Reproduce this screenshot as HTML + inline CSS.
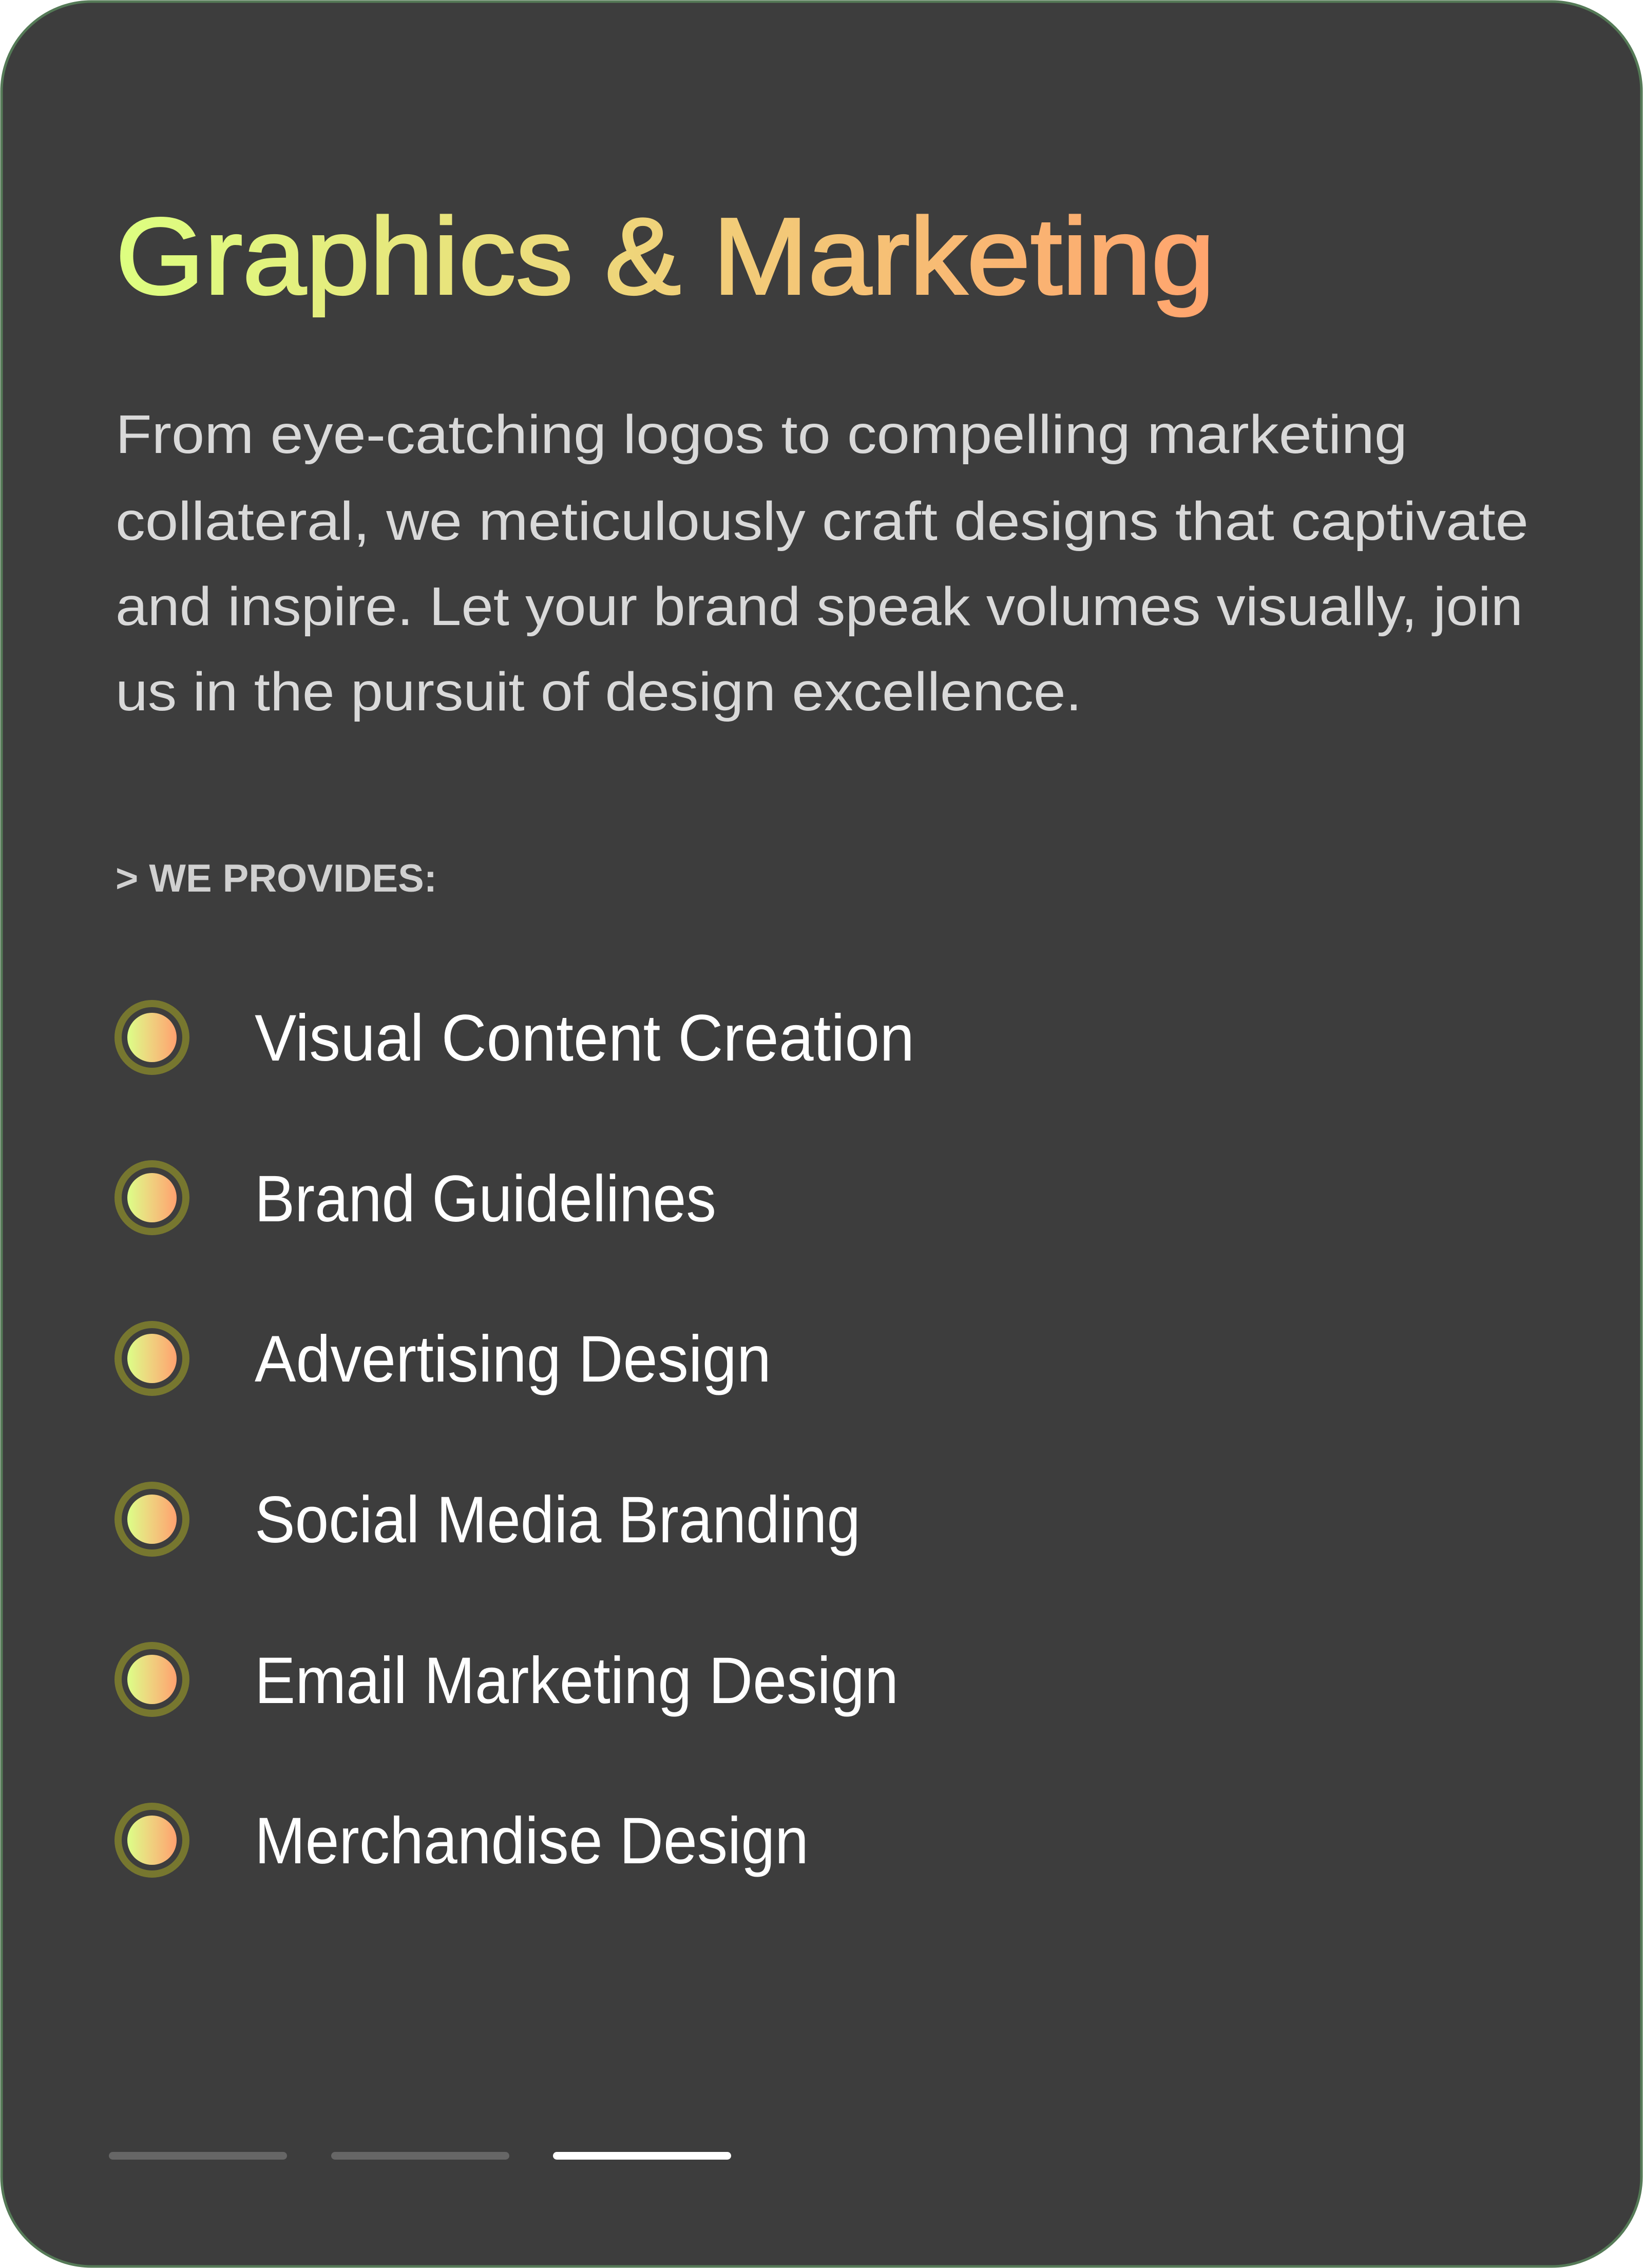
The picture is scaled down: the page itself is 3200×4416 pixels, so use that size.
<!DOCTYPE html>
<html><head><meta charset="utf-8"><style>
html,body{margin:0;padding:0;background:#fff;}
svg{display:block;}
text{font-family:"Liberation Sans",sans-serif;}
</style></head><body>
<svg width="3200" height="4416" viewBox="0 0 3200 4416" xmlns="http://www.w3.org/2000/svg">
<defs>
<linearGradient id="tg" x1="225" y1="0" x2="2366" y2="0" gradientUnits="userSpaceOnUse">
<stop offset="0" stop-color="#ddff80"/><stop offset="0.5" stop-color="#f0d27a"/><stop offset="1" stop-color="#ffa46e"/>
</linearGradient>
<linearGradient id="dg" x1="0" y1="0" x2="1" y2="0">
<stop offset="0" stop-color="#dcff88"/><stop offset="0.5" stop-color="#f0cf7e"/><stop offset="1" stop-color="#ffa16f"/>
</linearGradient>
</defs>
<rect x="3" y="3" width="3194" height="4410" rx="175" ry="175" fill="#3d3d3d" stroke="#557a57" stroke-width="5"/>
<text x="225" y="572" font-size="212" fill="url(#tg)" stroke="url(#tg)" stroke-width="4" textLength="2141" lengthAdjust="spacingAndGlyphs">Graphics &amp; Marketing</text>
<g fill="#d9d9d9" font-size="106">
<text x="225" y="882" textLength="2516" lengthAdjust="spacingAndGlyphs">From eye-catching logos to compelling marketing</text>
<text x="225" y="1051" textLength="2752" lengthAdjust="spacingAndGlyphs">collateral, we meticulously craft designs that captivate</text>
<text x="225" y="1217" textLength="2741" lengthAdjust="spacingAndGlyphs">and inspire. Let your brand speak volumes visually, join</text>
<text x="225" y="1383" textLength="1882" lengthAdjust="spacingAndGlyphs">us in the pursuit of design excellence.</text>
</g>
<text x="225" y="1736" font-size="76" font-weight="bold" fill="#d0d0d0" textLength="626" lengthAdjust="spacingAndGlyphs">&gt; WE PROVIDES:</text>
<g fill="#ffffff" font-size="128">
<text x="496" y="2065" textLength="1285" lengthAdjust="spacingAndGlyphs">Visual Content Creation</text>
<text x="496" y="2378" textLength="899" lengthAdjust="spacingAndGlyphs">Brand Guidelines</text>
<text x="496" y="2690" textLength="1006" lengthAdjust="spacingAndGlyphs">Advertising Design</text>
<text x="496" y="3003" textLength="1180" lengthAdjust="spacingAndGlyphs">Social Media Branding</text>
<text x="496" y="3316" textLength="1254" lengthAdjust="spacingAndGlyphs">Email Marketing Design</text>
<text x="496" y="3628" textLength="1079" lengthAdjust="spacingAndGlyphs">Merchandise Design</text>
</g>
<g fill="none" stroke="#77772f" stroke-width="14">
<circle cx="296" cy="2020" r="66"/><circle cx="296" cy="2332" r="66"/><circle cx="296" cy="2645" r="66"/>
<circle cx="296" cy="2958" r="66"/><circle cx="296" cy="3270" r="66"/><circle cx="296" cy="3583" r="66"/>
</g>
<g fill="url(#dg)">
<circle cx="296" cy="2020" r="48"/><circle cx="296" cy="2332" r="48"/><circle cx="296" cy="2645" r="48"/>
<circle cx="296" cy="2958" r="48"/><circle cx="296" cy="3270" r="48"/><circle cx="296" cy="3583" r="48"/>
</g>
<rect x="212" y="4190" width="347" height="15" rx="7.5" fill="#666666"/>
<rect x="645" y="4190" width="347" height="15" rx="7.5" fill="#666666"/>
<rect x="1077" y="4190" width="347" height="15" rx="7.5" fill="#ffffff"/>
</svg>
</body></html>
